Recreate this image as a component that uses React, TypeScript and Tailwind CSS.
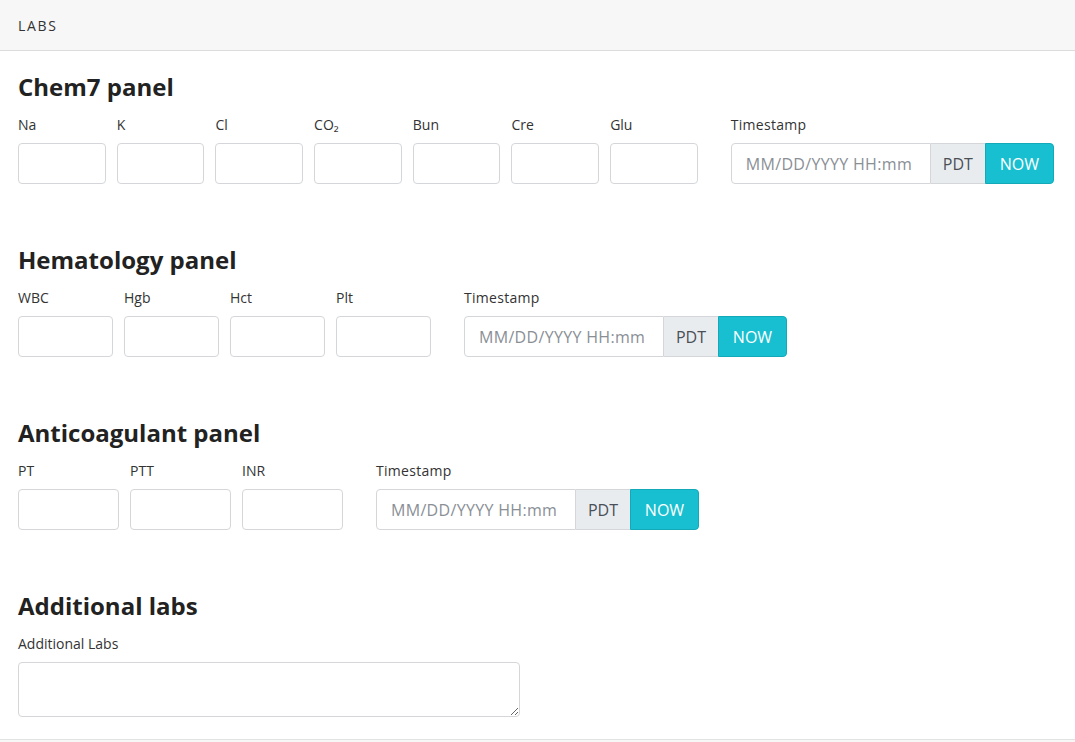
import React from 'react';

const font = { fontFamily: '"Open Sans", Lato, Arial, sans-serif' };

const Field: React.FC<{ label: React.ReactNode; width: string }> = ({ label, width }) => (
  <div className={`flex flex-col ${width}`}>
    <label className="text-[14px] leading-[20px] text-[#333] mb-[8px]">{label}</label>
    <input className="h-[41px] w-full rounded-[4px] border border-[#d4d6da] bg-white outline-none" />
  </div>
);

const Timestamp: React.FC = () => (
  <div className="flex flex-col">
    <label className="text-[14px] leading-[20px] text-[#333] mb-[8px] tracking-[0.02em]">Timestamp</label>
    <div className="flex h-[41px]">
      <input
        placeholder="MM/DD/YYYY HH:mm"
        className="w-[200px] h-full rounded-l-[4px] border border-[#d4d6da] bg-white px-[14px] text-[16px] tracking-[0.02em] text-[#333] placeholder:text-[#8a8f96] outline-none"
      />
      <span className="flex items-center justify-center w-[54px] h-full bg-[#e9ecef] border-y border-[#d4d6da] text-[16px] text-[#495057]">
        PDT
      </span>
      <button className="w-[69px] h-full rounded-r-[4px] bg-[#17bfd0] border border-[#13a9b9] text-[16px] text-white">
        NOW
      </button>
    </div>
  </div>
);

const Heading: React.FC<{ children: React.ReactNode }> = ({ children }) => (
  <h2 className="text-[24px] leading-[28px] font-bold text-[#222] mb-[14px]">{children}</h2>
);

const Panel: React.FC<{ title: string; labels: React.ReactNode[]; width: string }> = ({ title, labels, width }) => (
  <section className="mb-[62px]">
    <Heading>{title}</Heading>
    <div className="flex items-end">
      <div className="flex gap-[11px] mr-[33px]">
        {labels.map((l, i) => (
          <Field key={i} label={l} width={width} />
        ))}
      </div>
      <Timestamp />
    </div>
  </section>
);

export default function App() {
  return (
    <div className="w-[1075px] h-[742px] bg-white overflow-hidden" style={font}>
      <div className="h-[51px] bg-[#f7f7f7] border-b border-[#dcdcdc] flex items-center px-[18px]">
        <span className="text-[14px] tracking-[0.12em] text-[#333]">LABS</span>
      </div>
      <div className="border-b border-[#e2e2e2] px-[18px] pt-[22px] pb-[22px]">
        <Panel title="Chem7 panel" width="w-[87.7px]" labels={['Na', 'K', 'Cl', 'CO₂', 'Bun', 'Cre', 'Glu']} />
        <Panel title="Hematology panel" width="w-[95px]" labels={['WBC', 'Hgb', 'Hct', 'Plt']} />
        <Panel title="Anticoagulant panel" width="w-[101px]" labels={['PT', 'PTT', 'INR']} />
        <section>
          <Heading>Additional labs</Heading>
          <label className="block text-[14px] leading-[20px] text-[#333] mb-[8px]">Additional Labs</label>
          <textarea className="block w-[502px] h-[55px] rounded-[4px] border border-[#d4d6da] bg-white outline-none" />
        </section>
      </div>
      <div className="h-full bg-[#f7f7f7]" />
    </div>
  );
}
